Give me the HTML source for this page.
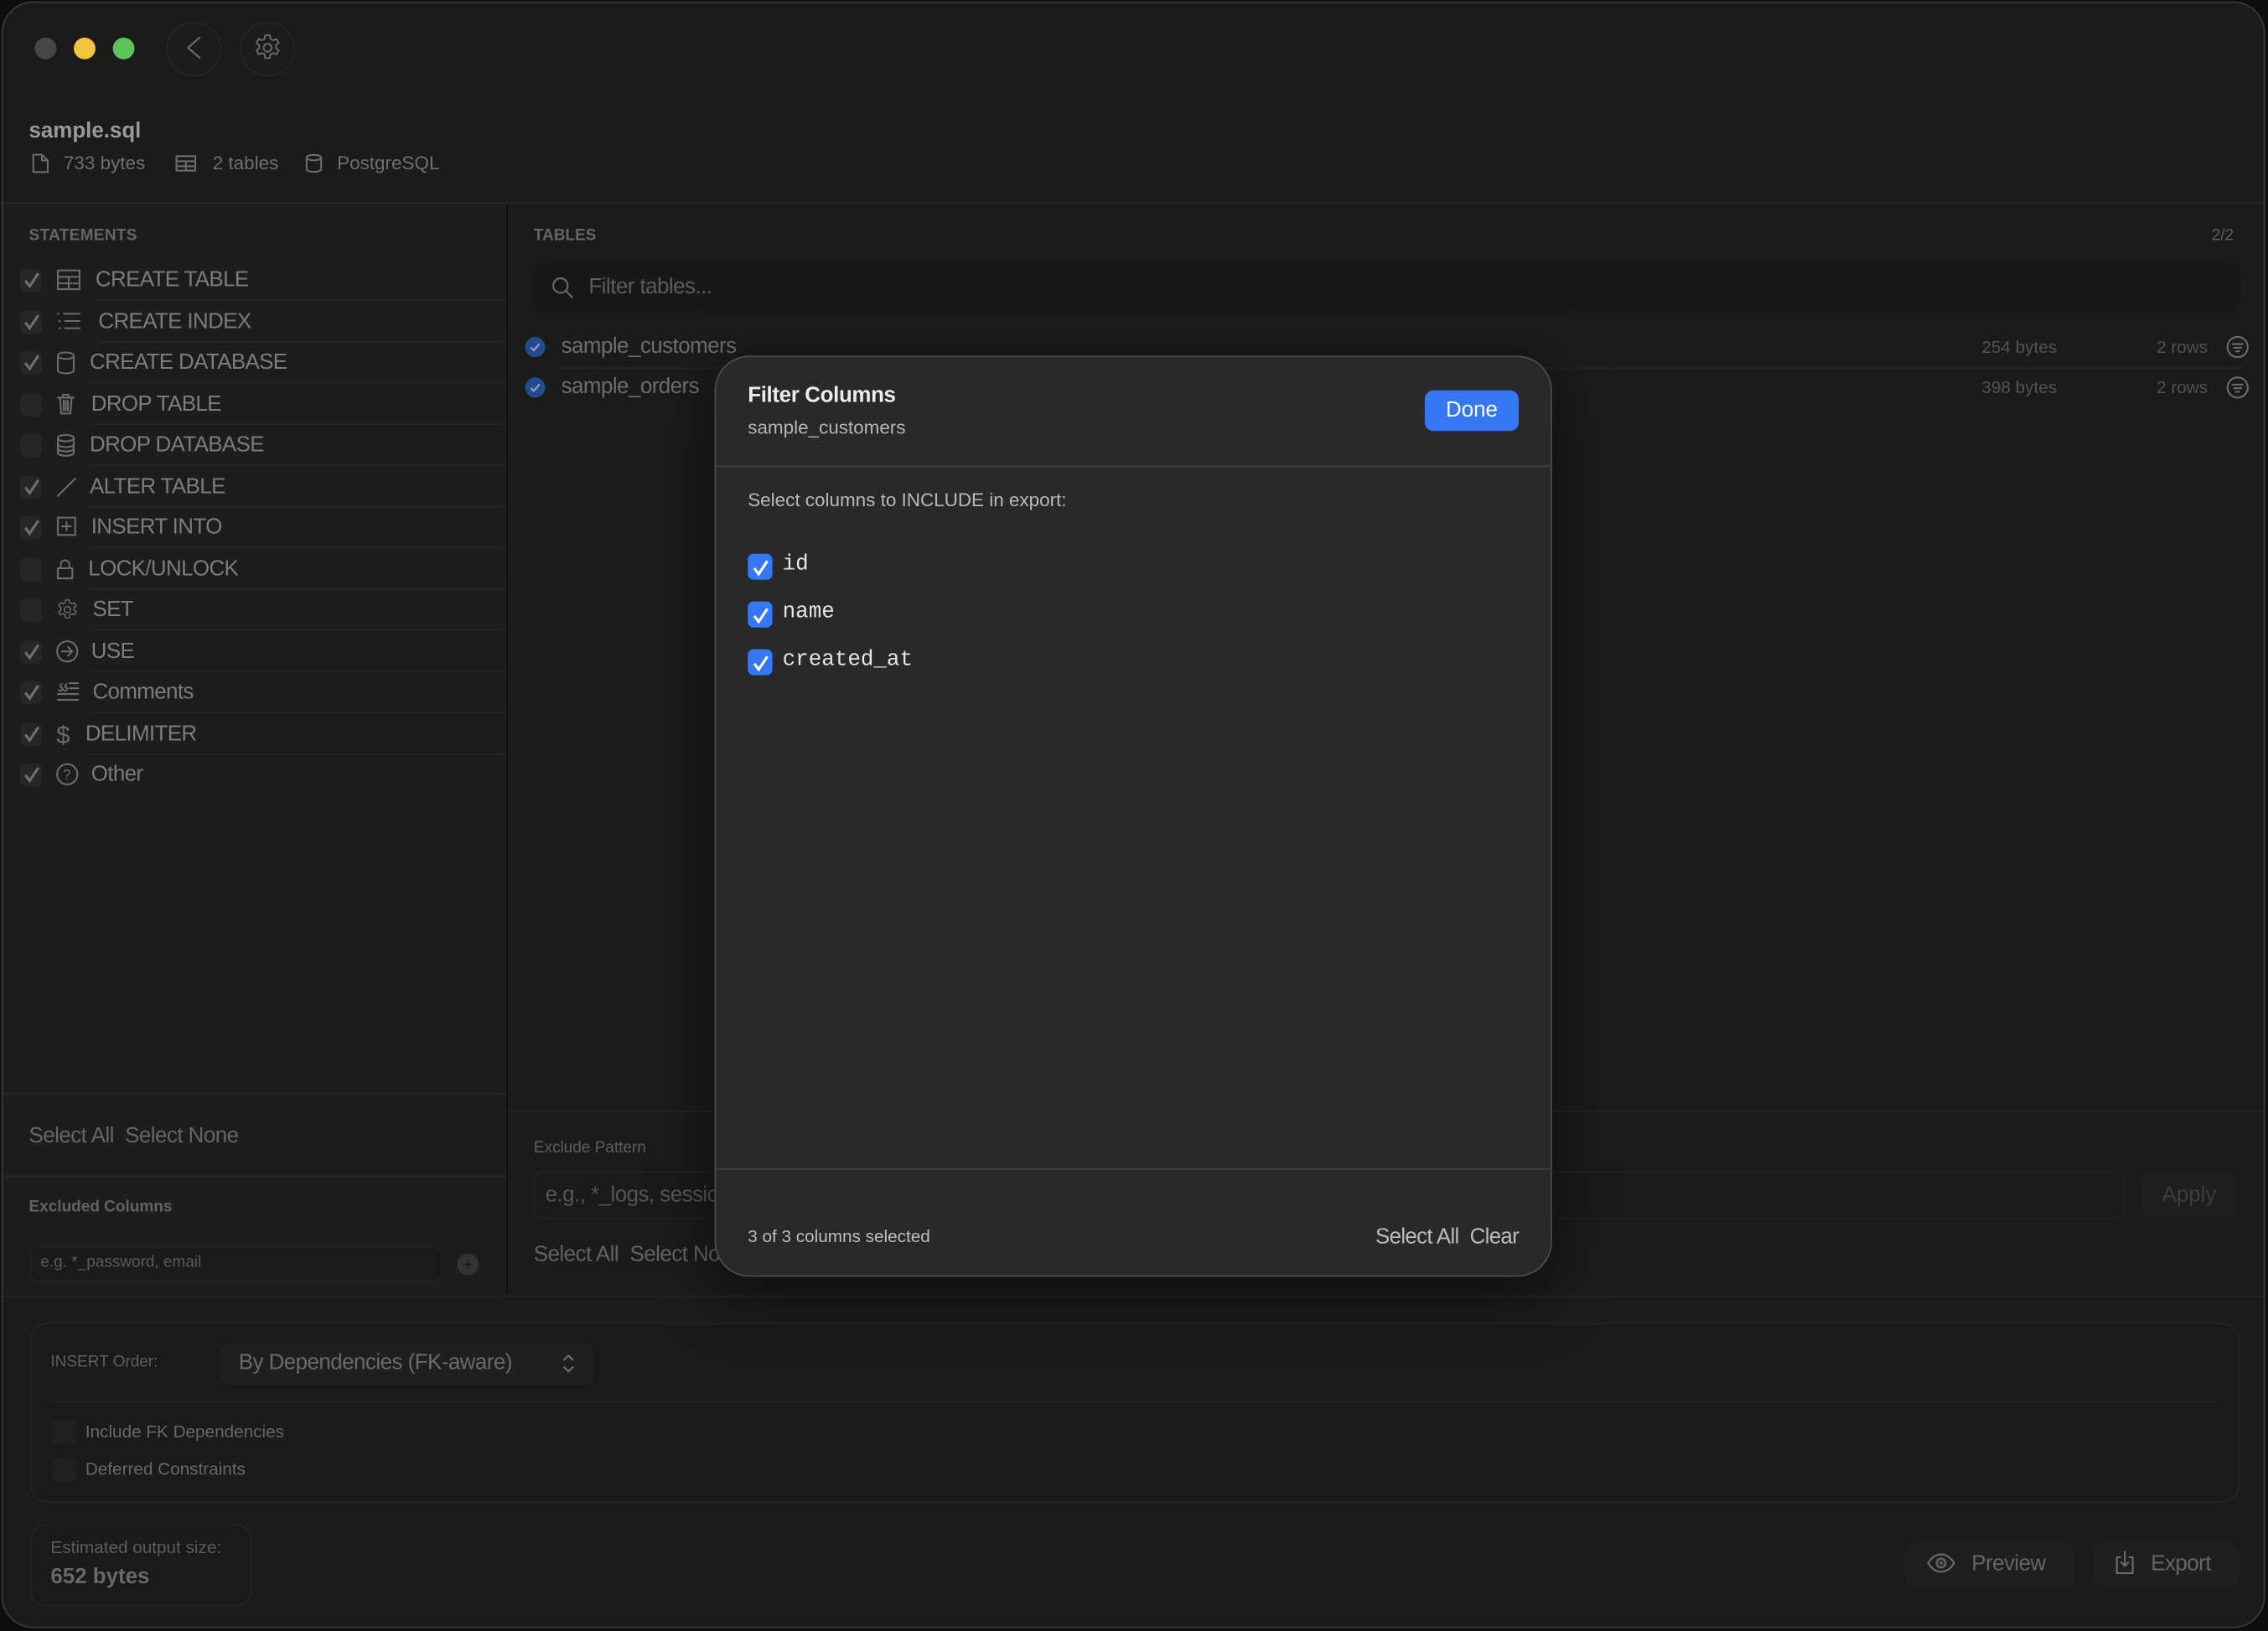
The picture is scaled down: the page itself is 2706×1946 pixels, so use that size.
<!DOCTYPE html>
<html><head><meta charset="utf-8"><style>
*{box-sizing:border-box;margin:0;padding:0}
html,body{width:2706px;height:1946px;background:#0e0e0e;overflow:hidden}
#s{position:absolute;left:0;top:0;width:1568px;height:1128px;transform:scale(1.72577,1.72518);transform-origin:0 0;font-family:"Liberation Sans",sans-serif}
.a{position:absolute;white-space:nowrap}
#win{position:absolute;left:1px;top:1px;width:1565px;height:1125px;border-radius:22px;background:#1b1b1b;border:1px solid #3a3a3a;overflow:hidden}
.hl{position:absolute;height:1px;background:#282828}
.vl{position:absolute;width:1px;background:#0f0f0f}
.cb{position:absolute;width:14px;height:14px;border-radius:4px;background:#2a2a2a}
.row{font-size:15px;color:#7c7c7c;letter-spacing:-0.35px}
svg{position:absolute;overflow:visible}
.ic{fill:none;stroke:#6c6c6c;stroke-width:1.2;stroke-linecap:round;stroke-linejoin:round}
.t15{letter-spacing:-0.3px}
</style></head><body><div id="s">
<div id="win">
<div class="a" style="left:22px;top:24px;width:15px;height:15px;border-radius:50%;background:#474747"></div>
<div class="a" style="left:49px;top:24px;width:15px;height:15px;border-radius:50%;background:#f2c43d"></div>
<div class="a" style="left:76px;top:24px;width:15px;height:15px;border-radius:50%;background:#5fc35c"></div>
<div class="a" style="left:113px;top:13px;width:38px;height:38px;border-radius:50%;border:1px solid #252525;background:#1c1c1c"></div>
<svg style="left:0;top:0" width="10" height="10"><path class="ic" stroke="#8a8a8a" stroke-width="1.6" d="M136 24 L128 31 L136 38"/></svg>
<div class="a" style="left:164px;top:13px;width:38px;height:38px;border-radius:50%;border:1px solid #252525;background:#1c1c1c"></div>
<svg style="left:172px;top:20px" width="22" height="22" viewBox="0 0 24 24"><path class="ic" stroke="#8a8a8a" stroke-width="1.5" d="M10.3 2.6h3.4l.5 2.7 1.9 1.1 2.6-1 1.7 2.9-2.1 1.8v2.2l2.1 1.8-1.7 2.9-2.6-1-1.9 1.1-.5 2.7h-3.4l-.5-2.7-1.9-1.1-2.6 1-1.7-2.9 2.1-1.8v-2.2L3.6 8.3l1.7-2.9 2.6 1 1.9-1.1z"/><circle class="ic" stroke="#8a8a8a" stroke-width="1.5" cx="12" cy="12" r="3"/></svg>
<div class="a" style="left:18px;top:80px;font-size:15px;font-weight:bold;color:#9a9a9a">sample.sql</div>
<svg style="left:20px;top:104px" width="12" height="14"><path class="ic" d="M1 1h6l4 4v8H1z M7 1v4h4"/></svg>
<div class="a" style="left:42px;top:103px;font-size:13px;color:#6f6f6f">733 bytes</div>
<svg style="left:119px;top:105px" width="15" height="12"><path class="ic" d="M1 1h13v10H1z M1 4.5h13 M1 8h13 M7.5 4.5v6.5"/></svg>
<div class="a" style="left:145px;top:103px;font-size:13px;color:#6f6f6f">2 tables</div>
<svg style="left:209px;top:104px" width="12" height="14"><path class="ic" d="M1 3c0-2.5 10-2.5 10 0v8c0 2.5-10 2.5-10 0z M1 3c0 2.5 10 2.5 10 0"/></svg>
<div class="a" style="left:231px;top:103px;font-size:13px;color:#6f6f6f">PostgreSQL</div>
<div class="hl" style="left:0;top:138px;width:1566px"></div>

<div class="a" style="left:0;top:139px;width:348px;height:755px;background:#1d1d1d"></div>
<div class="vl" style="left:348px;top:139px;height:755px"></div>
<div class="a" style="left:18px;top:155px;font-size:11px;font-weight:bold;color:#656565;letter-spacing:.2px">STATEMENTS</div>
<div id="rows"></div>
<div class="hl" style="left:0;top:754px;width:348px"></div>
<div class="a t15" style="left:18px;top:775px;font-size:15px;color:#666">Select All&nbsp; Select None</div>
<div class="hl" style="left:0;top:811px;width:348px"></div>
<div class="a" style="left:18px;top:827px;font-size:11px;font-weight:bold;color:#626262">Excluded Columns</div>
<div class="a" style="left:19px;top:860px;width:285px;height:25px;border-radius:6px;border:1px solid #222;background:#1a1a1a"></div>
<div class="a" style="left:26px;top:865px;font-size:11px;color:#5a5a5a">e.g. *_password, email</div>
<div class="a" style="left:314px;top:865px;width:15px;height:15px;border-radius:50%;background:#333;color:#1d1d1d;font-size:14px;line-height:15px;text-align:center">+</div>

<div class="a" style="left:367px;top:155px;font-size:11px;font-weight:bold;color:#656565">TABLES</div>
<div class="a" style="left:1527px;top:155px;font-size:11px;color:#5e5e5e">2/2</div>
<div class="a" style="left:367px;top:179px;width:1180px;height:36px;border-radius:8px;background:#181818"></div>
<svg style="left:379px;top:189px" width="16" height="16"><circle class="ic" cx="6.5" cy="6.5" r="5"/><path class="ic" d="M10 10l4.5 4.5"/></svg>
<div class="a t15" style="left:405px;top:188px;font-size:15px;color:#5c5c5c">Filter tables...</div>
<div class="a" style="left:361px;top:231px;width:14px;height:14px;border-radius:50%;background:#234a8a"></div>
<svg style="left:361px;top:231px" width="14" height="14"><path d="M4 7.3l2 2 4-4.5" fill="none" stroke="#8aa4c9" stroke-width="1.3"/></svg>
<div class="a t15" style="left:386px;top:229px;font-size:15px;color:#6d6d6d">sample_customers</div>
<div class="hl" style="left:384px;top:252px;width:1164px;background:#232323"></div>
<div class="a" style="left:361px;top:259px;width:14px;height:14px;border-radius:50%;background:#234a8a"></div>
<svg style="left:361px;top:259px" width="14" height="14"><path d="M4 7.3l2 2 4-4.5" fill="none" stroke="#8aa4c9" stroke-width="1.3"/></svg>
<div class="a t15" style="left:386px;top:257px;font-size:15px;color:#6d6d6d">sample_orders</div>
<div class="a" style="left:1368px;top:231px;font-size:12px;color:#525252">254 bytes</div>
<div class="a" style="left:1489px;top:231px;font-size:12px;color:#525252">2 rows</div>
<svg style="left:1537px;top:230px" width="16" height="16"><circle class="ic" stroke="#4e4e4e" cx="8" cy="8" r="7"/><path class="ic" stroke="#4e4e4e" d="M4.5 6h7 M5.5 8.5h5 M6.8 11h2.4"/></svg>
<div class="a" style="left:1368px;top:259px;font-size:12px;color:#525252">398 bytes</div>
<div class="a" style="left:1489px;top:259px;font-size:12px;color:#525252">2 rows</div>
<svg style="left:1537px;top:258px" width="16" height="16"><circle class="ic" stroke="#4e4e4e" cx="8" cy="8" r="7"/><path class="ic" stroke="#4e4e4e" d="M4.5 6h7 M5.5 8.5h5 M6.8 11h2.4"/></svg>
<div class="hl" style="left:349px;top:766px;width:1217px;background:#252525"></div>
<div class="a" style="left:367px;top:786px;font-size:11px;color:#5e5e5e">Exclude Pattern</div>
<div class="a" style="left:367px;top:808px;width:1100px;height:33px;border-radius:7px;border:1px solid #222;background:#1a1a1a"></div>
<div class="a t15" style="left:375px;top:816px;font-size:15px;color:#555">e.g., *_logs, sessions</div>
<div class="a" style="left:1478px;top:810px;width:67px;height:29px;border-radius:6px;background:#1e1e1e;color:#3d3d3d;font-size:15px;text-align:center;line-height:29px">Apply</div>
<div class="a t15" style="left:367px;top:857px;font-size:15px;color:#636363">Select All&nbsp; Select None</div>
<div class="hl" style="left:0;top:894px;width:1566px;background:#252525"></div>

<div class="a" style="left:19px;top:913px;width:1527px;height:124px;border-radius:11px;border:1px solid #242424;background:#1a1a1a"></div>
<div class="a" style="left:33px;top:934px;font-size:11px;color:#5e5e5e">INSERT Order:</div>
<div class="a" style="left:150px;top:927px;width:259px;height:29px;border-radius:7px;background:#1f1f1f"></div>
<div class="a t15" style="left:163px;top:932px;font-size:15px;color:#6a6a6a">By Dependencies (FK-aware)</div>
<svg style="left:386px;top:933px" width="10" height="16"><path class="ic" stroke="#666" stroke-width="1.4" d="M2 5.5l3-3 3 3 M2 10.5l3 3 3-3"/></svg>
<div class="hl" style="left:33px;top:967px;width:1500px;background:#232323"></div>
<div class="cb" style="left:34px;top:980px;width:17px;height:17px;background:#202020"></div>
<div class="a" style="left:57px;top:981px;font-size:12px;color:#686868">Include FK Dependencies</div>
<div class="cb" style="left:34px;top:1006px;width:17px;height:17px;background:#202020"></div>
<div class="a" style="left:57px;top:1007px;font-size:12px;color:#686868">Deferred Constraints</div>
<div class="a" style="left:19px;top:1052px;width:153px;height:57px;border-radius:11px;border:1px solid #232323;background:#1a1a1a"></div>
<div class="a" style="left:33px;top:1061px;font-size:12px;color:#5c5c5c">Estimated output size:</div>
<div class="a" style="left:33px;top:1080px;font-size:15px;font-weight:bold;color:#686868">652 bytes</div>
<div class="a" style="left:1315px;top:1065px;width:117px;height:30px;border-radius:7px;background:#1f1f1f"></div>
<svg style="left:1330px;top:1071px" width="20" height="16"><path class="ic" stroke="#5e5e5e" stroke-width="1.4" d="M1 8c5-8 13-8 18 0c-5 8-13 8-18 0z"/><circle cx="10" cy="8" r="3" fill="none" stroke="#5e5e5e" stroke-width="1.6"/><circle cx="10" cy="8" r="1.2" fill="#5e5e5e"/></svg>
<div class="a t15" style="left:1361px;top:1071px;font-size:15px;color:#666">Preview</div>
<div class="a" style="left:1445px;top:1065px;width:101px;height:30px;border-radius:7px;background:#1f1f1f"></div>
<svg style="left:1460px;top:1070px" width="14" height="18"><path class="ic" stroke="#5e5e5e" d="M4 5H1.5v11h11V5H10 M7 1v10 M4.5 8.5L7 11l2.5-2.5"/></svg>
<div class="a t15" style="left:1485px;top:1071px;font-size:15px;color:#666">Export</div>
</div>

<div class="a" style="left:494px;top:246px;width:579px;height:637px;border-radius:24px;background:#2a292a;border:1px solid #4e4e4e;box-shadow:0 10px 40px rgba(0,0,0,.5);overflow:hidden">
<div class="a" style="left:22px;top:18px;font-size:15px;font-weight:bold;color:#ececec;letter-spacing:-0.2px">Filter Columns</div>
<div class="a" style="left:22px;top:41px;font-size:13px;color:#b5b5b5">sample_customers</div>
<div class="a" style="left:490px;top:23px;width:65px;height:28px;border-radius:6px;background:#3478f6;color:#fff;font-size:15px;text-align:center;line-height:28px">Done</div>
<div class="hl" style="left:0;top:75px;width:579px;background:#414141"></div>
<div class="a" style="left:22px;top:91px;font-size:13px;color:#b8b8b8">Select columns to INCLUDE in export:</div>
<div id="cols"></div>
<div class="hl" style="left:0;top:561px;width:579px;background:#414141"></div>
<div class="a" style="left:22px;top:601px;font-size:12px;color:#bdbdbd">3 of 3 columns selected</div>
<div class="a" style="right:22px;top:600px;font-size:15px;color:#bbb;letter-spacing:-0.4px">Select All&nbsp; Clear</div>
</div>
</div>
<script>
var R=[["CREATE TABLE",1,'<path class="ic" d="M1 1h15v13H1z M1 5.5h15 M1 10h15 M8.5 5.5v8.5"/>',64],
["CREATE INDEX",1,'<path class="ic" d="M1 2h.5 M5 2h11 M2 7h.5 M6 7h10 M2 12h.5 M6 12h10"/>',66],
["CREATE DATABASE",1,'<path class="ic" d="M1 3c0-3 11-3 11 0v10c0 3-11 3-11 0z M1 3c0 3 11 3 11 0"/>',60],
["DROP TABLE",0,'<path class="ic" d="M1 3h11 M4.5 3V1h4v2 M2.5 3l.8 11h6.4l.8-11 M5 5v7 M6.5 5v7 M8 5v7"/>',61],
["DROP DATABASE",0,'<path class="ic" d="M1 3c0-3 11-3 11 0v10c0 3-11 3-11 0z M1 3c0 3 11 3 11 0 M1 7c0 3 11 3 11 0 M1 10c0 3 11 3 11 0"/>',60],
["ALTER TABLE",1,'<path class="ic" d="M1 14L13 2"/>',60],
["INSERT INTO",1,'<path class="ic" d="M1 1h12v12H1z M7 4v6 M4 7h6"/>',61],
["LOCK/UNLOCK",0,'<path class="ic" d="M1 7h10v7H1z M3 7V4.5c0-4 6-4 6 0V7"/>',59],
["SET",0,'<g transform="translate(-1,-1) scale(.72)"><path class="ic" stroke-width="1.7" d="M10.3 2.6h3.4l.5 2.7 1.9 1.1 2.6-1 1.7 2.9-2.1 1.8v2.2l2.1 1.8-1.7 2.9-2.6-1-1.9 1.1-.5 2.7h-3.4l-.5-2.7-1.9-1.1-2.6 1-1.7-2.9 2.1-1.8v-2.2L3.6 8.3l1.7-2.9 2.6 1 1.9-1.1z"/><circle class="ic" stroke-width="1.7" cx="12" cy="12" r="3"/></g>',62],
["USE",1,'<circle class="ic" cx="7.5" cy="7.5" r="7"/><path class="ic" d="M4 7.5h7 M8 4.5l3 3-3 3"/>',61],
["Comments",1,'<path class="ic" d="M9 1.5h6 M9 5h6 M1 9h14 M1 13h14"/><path d="M1.5 5.5a1.3 1.3 0 1 0 1.3-1.3c0-1 .5-2 1.3-2.5 M4.8 5.5a1.3 1.3 0 1 0 1.3-1.3c0-1 .5-2 1.3-2.5" fill="none" stroke="#6c6c6c" stroke-width="1.1"/>',62],
["DELIMITER",1,'<text x="0" y="14" font-size="17" fill="#6c6c6c">$</text>',57],
["Other",1,'<circle class="ic" cx="7.5" cy="7.5" r="7"/><text x="4.5" y="11" font-size="10" fill="#6c6c6c">?</text>',61]];
var h='';R.forEach(function(r,i){var y=192+i*28.5;
h+='<div class="cb" style="left:12px;top:'+(y-8)+'px;width:15px;height:16px;background:#262626"></div>';
if(r[1])h+='<svg style="left:14px;top:'+(y-6)+'px" width="12" height="12"><path d="M1.5 6l3 4 6-9" fill="none" stroke="#6f6f6f" stroke-width="1.8"/></svg>';
h+='<svg style="left:37px;top:'+(y-8)+'px" width="16" height="16">'+r[2]+'</svg>';
h+='<div class="a row" style="left:'+r[3]+'px;top:'+(y-9)+'px">'+r[0]+'</div>';
if(i<12)h+='<div class="hl" style="left:'+r[3]+'px;top:'+(y+13)+'px;width:'+(348-r[3])+'px;background:#252525"></div>';});
document.getElementById('rows').innerHTML=h;
var c='';["id","name","created_at"].forEach(function(n,i){var y=145+i*33;
c+='<div class="a" style="left:22px;top:'+(y-9)+'px;width:17px;height:18px;border-radius:4px;background:#3478f6"></div>';
c+='<svg style="left:25px;top:'+(y-5)+'px" width="12" height="12"><path d="M1.5 6l3 4 6-9" fill="none" stroke="#fff" stroke-width="1.8"/></svg>';
c+='<div class="a" style="left:46px;top:'+(y-10)+'px;font-family:\'Liberation Mono\',monospace;font-size:15px;color:#e4e4e4">'+n+'</div>';});
document.getElementById('cols').innerHTML=c;
</script>
</div></body></html>
